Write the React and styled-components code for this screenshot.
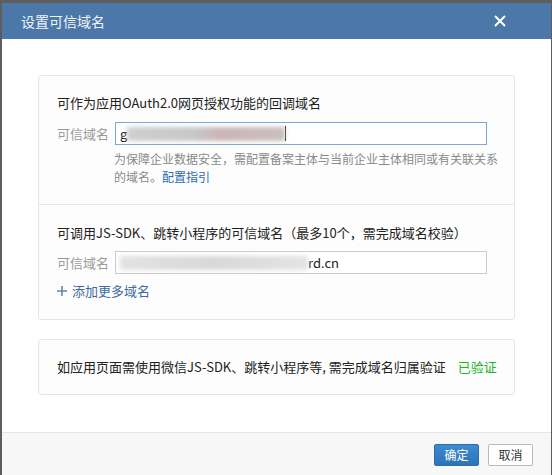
import React from 'react'
import styled, { createGlobalStyle } from 'styled-components'

const GlobalStyle = createGlobalStyle`
  html, body {
    margin: 0;
    padding: 0;
    height: 475px;
    overflow: hidden;
    background: #5d5d5d;
    font-family: "Noto Sans CJK SC", "Noto Sans", sans-serif;
  }
`

const Overlay = styled.div`
  padding: 3px 0 0 2px;
  height: 472px;
  overflow: hidden;
`

const Dialog = styled.div`
  width: 549px;
  background: #fff;
  display: flex;
  flex-direction: column;
`

const Header = styled.div`
  height: 36px;
  background: #4b77a9;
  display: flex;
  align-items: center;
  justify-content: space-between;
  padding: 0 45px 0 19px;
`

const Title = styled.div`
  color: #f1f4f8;
  font-size: 14px;
  line-height: 18px;
`

const Close = styled.button`
  border: 0;
  background: none;
  padding: 0;
  width: 12px;
  height: 12px;
  display: flex;
  cursor: pointer;
`

const Body = styled.div`
  padding: 36px 36px 37px;
  display: flex;
  flex-direction: column;
  gap: 19px;
`

const Card = styled.div`
  border: 1px solid #e6e6e6;
  border-radius: 3px;
  background: #fdfdfd;
`

const Section = styled.div`
  padding: ${p => p.$top}px 18px 18px;
  & + & {
    border-top: 1px solid #e6e6e6;
  }
`

const SectionTitle = styled.div`
  font-size: 13px;
  line-height: 18px;
  color: #222;
  white-space: nowrap;
  margin-bottom: ${p => p.$gap}px;
`

const Row = styled.div`
  display: flex;
  align-items: center;
`

const Label = styled.div`
  width: 58px;
  font-size: 13px;
  line-height: 18px;
  color: #9a9a9a;
`

const FakeInput = styled.div`
  box-sizing: border-box;
  width: 372px;
  height: 23px;
  border: 1px solid ${p => (p.$focused ? '#7ea8d6' : '#cccccc')};
  background: #fff;
  display: flex;
  align-items: center;
  padding-left: 4px;
  font-size: 13px;
  color: #222;
  overflow: hidden;
`

const Smudge = styled.span`
  display: inline-block;
  width: ${p => p.$w}px;
  height: 14px;
  background: ${p => p.$bg};
  filter: blur(2px);
`

const Caret = styled.span`
  display: inline-block;
  width: 1px;
  height: 15px;
  background: #111;
`

const Help = styled.div`
  margin: 5px 0 0 57px;
  width: 384px;
  font-size: 12px;
  line-height: 18px;
  color: #8a8a8a;
`

const Link = styled.a`
  color: #2b6cb3;
  text-decoration: none;
`

const AddMore = styled.a`
  margin-top: 8px;
  display: inline-flex;
  align-items: center;
  gap: 5px;
  font-size: 13px;
  line-height: 18px;
  color: #3b6ba3;
  text-decoration: none;
`

const Notice = styled.div`
  padding: 18px;
  font-size: 13px;
  line-height: 18px;
  color: #222;
  white-space: nowrap;
  display: flex;
  gap: 12px;
`

const Verified = styled.span`
  color: #1fb41f;
`

const Footer = styled.div`
  border-top: 1px solid #e5e5e5;
  background: #f7f7f7;
  padding: 11px 18px 12px;
  display: flex;
  justify-content: flex-end;
  gap: 9px;
`

const Button = styled.button`
  box-sizing: border-box;
  width: 45px;
  height: 22px;
  padding: 0;
  border-radius: 2px;
  font-family: inherit;
  font-size: 12px;
  line-height: 20px;
  cursor: pointer;
  border: 1px solid ${p => (p.$primary ? '#2c6dae' : '#b9b9b9')};
  color: ${p => (p.$primary ? '#fff' : '#333')};
  background: ${p => (p.$primary ? 'linear-gradient(#3d8bd1, #2e73b8)' : '#fff')};
`

export default function App() {
  return (
    <>
      <GlobalStyle />
      <Overlay>
        <Dialog>
          <Header>
            <Title>设置可信域名</Title>
            <Close aria-label="关闭">
              <svg width="12" height="12" viewBox="0 0 12 12">
                <path d="M1 1 L11 11 M11 1 L1 11" stroke="#fff" strokeWidth="2" />
              </svg>
            </Close>
          </Header>
          <Body>
            <Card>
              <Section $top={18}>
                <SectionTitle $gap={10}>可作为应用OAuth2.0网页授权功能的回调域名</SectionTitle>
                <Row>
                  <Label>可信域名</Label>
                  <FakeInput $focused>
                    g
                    <Smudge $w={158} $bg="linear-gradient(90deg, #cfcfcf, #c8c8c8 40%, #c9b6b8 60%, #cbbfc0)" />
                    <Caret />
                  </FakeInput>
                </Row>
                <Help>
                  为保障企业数据安全，需配置备案主体与当前企业主体相同或有关联关系的域名。
                  <Link href="#">配置指引</Link>
                </Help>
              </Section>
              <Section $top={19}>
                <SectionTitle $gap={9}>可调用JS-SDK、跳转小程序的可信域名（最多10个，需完成域名校验）</SectionTitle>
                <Row>
                  <Label>可信域名</Label>
                  <FakeInput>
                    <Smudge $w={188} $bg="linear-gradient(90deg, #e2e2e2, #d8d8d8 50%, #e4e4e4)" />
                    rd.cn
                  </FakeInput>
                </Row>
                <AddMore href="#">
                  <svg width="10" height="10" viewBox="0 0 10 10">
                    <path d="M5 0 V10 M0 5 H10" stroke="#6786ad" strokeWidth="1.6" />
                  </svg>
                  添加更多域名
                </AddMore>
              </Section>
            </Card>
            <Card>
              <Notice>
                <span>如应用页面需使用微信JS-SDK、跳转小程序等, 需完成域名归属验证</span>
                <Verified>已验证</Verified>
              </Notice>
            </Card>
          </Body>
          <Footer>
            <Button $primary>确定</Button>
            <Button>取消</Button>
          </Footer>
        </Dialog>
      </Overlay>
    </>
  )
}
